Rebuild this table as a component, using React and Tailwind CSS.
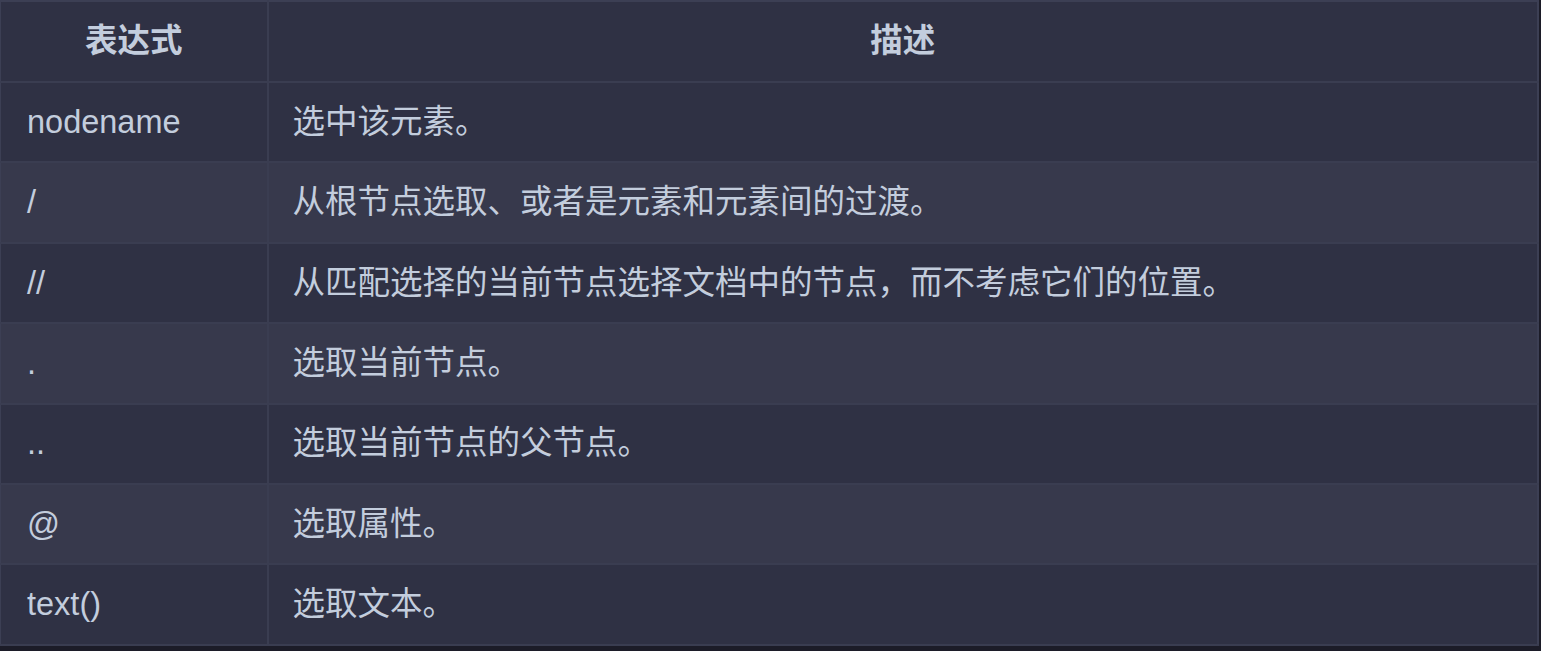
import React from "react";

const rows = [
  ["nodename", "选中该元素。"],
  ["/", "从根节点选取、或者是元素和元素间的过渡。"],
  ["//", "从匹配选择的当前节点选择文档中的节点，而不考虑它们的位置。"],
  [".", "选取当前节点。"],
  ["..", "选取当前节点的父节点。"],
  ["@", "选取属性。"],
  ["text()", "选取文本。"],
];

export default function App() {
  return (
    <div
      className="w-[1541px] h-[651px] bg-[#1c1c28] overflow-hidden"
      style={{ fontFamily: '"Liberation Sans", "Noto Sans CJK SC", Arial, sans-serif' }}
    >
      <table className="w-[1539px] border-collapse border-t-2 border-l border-r-2 border-b-2 border-[#3c3f54] text-[32.5px] text-[#c3cddd]">
        <thead>
          <tr className="bg-[#2f3144] h-[81px]">
            <th className="w-[267px] border-r-2 border-b-2 border-[#3a3d51] font-bold text-center">表达式</th>
            <th className="border-b-2 border-[#3a3d51] font-bold text-center">描述</th>
          </tr>
        </thead>
        <tbody>
          {rows.map(([a, b], i) => (
            <tr key={i} className={`h-[80.4px] ${i % 2 === 0 ? "bg-[#2f3144]" : "bg-[#37394c]"}`}>
              <td className="border-r-2 border-b-2 border-[#3a3d51] pl-[26px] font-normal">{a}</td>
              <td className="border-b-2 border-[#3a3d51] pl-[24px]">{b}</td>
            </tr>
          ))}
        </tbody>
      </table>
    </div>
  );
}
